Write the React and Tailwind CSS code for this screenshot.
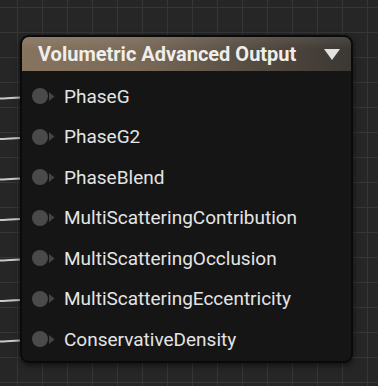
import React from "react";

const pins = [
  "PhaseG",
  "PhaseG2",
  "PhaseBlend",
  "MultiScatteringContribution",
  "MultiScatteringOcclusion",
  "MultiScatteringEccentricity",
  "ConservativeDensity",
];

export default function App() {
  const rowH = 40.5;
  const firstY = 97;
  return (
    <div
      className="relative w-[378px] h-[386px] overflow-hidden bg-[#262626] pl-[20px] pt-[35px]"
      style={{
        backgroundImage:
          "linear-gradient(to right, #363636 1px, transparent 1px), linear-gradient(to bottom, #363636 1px, transparent 1px)",
        backgroundSize: "25px 25px",
        backgroundPosition: "17px 7px",
        fontFamily: "Roboto, 'Liberation Sans', sans-serif",
      }}
    >
      <svg className="absolute left-0 top-0" width="40" height="386">
        {pins.map((p, i) => {
          const y = firstY + i * rowH;
          return (
            <path
              key={p}
              d={`M0 ${y + 1.5} C 12 ${y + 1.5}, 20 ${y}, 36 ${y}`}
              stroke="#c8c8c8"
              strokeWidth="2"
              fill="none"
            />
          );
        })}
      </svg>
      <div className="relative w-[333px] h-[328px] rounded-[9px] border-2 border-[#0a0a0a] bg-[#151515] shadow-[0_2px_6px_rgba(0,0,0,0.6)] overflow-hidden flex flex-col">
        <div className="h-[34px] flex items-center justify-between pl-[16px] pr-[10px] bg-[linear-gradient(to_right,#87745f_0%,#7a6a58_35%,#564c42_70%,#3b3733_100%)] relative">
          <div className="absolute inset-x-0 top-0 h-[12px] bg-[linear-gradient(to_bottom,rgba(255,255,255,0.08),transparent)]" />
          <span className="relative text-[20px] font-bold text-[#f0eeea] leading-none">
            Volumetric Advanced Output
          </span>
          <svg className="relative" width="18" height="13" viewBox="0 0 18 13">
            <path d="M1 1 L17 1 L9 12 Z" fill="#e2e2e2" />
          </svg>
        </div>
        <div className="flex flex-col pt-[5px]">
          {pins.map((p) => (
            <div key={p} className="h-[40.5px] flex items-center">
              <div className="ml-[10px] w-[16px] h-[16px] rounded-full bg-[#4a4a4a]" />
              <svg className="ml-[1px]" width="6" height="9" viewBox="0 0 6 9">
                <path d="M0 0 L5.5 4.5 L0 9 Z" fill="#444444" />
              </svg>
              <span className="ml-[9px] text-[19px] text-[#e4e4e4] leading-none">{p}</span>
            </div>
          ))}
        </div>
      </div>
    </div>
  );
}
